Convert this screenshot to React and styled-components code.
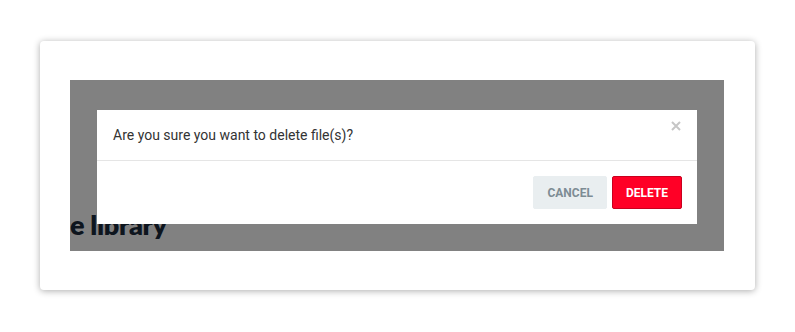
import React from 'react';
import styled, { createGlobalStyle } from 'styled-components';

const GlobalStyle = createGlobalStyle`
  html, body {
    margin: 0;
    padding: 0;
    background: #ffffff;
    font-family: Roboto, 'Liberation Sans', sans-serif;
  }
`;

const Page = styled.div`
  padding: 41px 40px 40px;
`;

const Card = styled.section`
  background: #fff;
  border-radius: 4px;
  box-shadow: 0 1px 7px rgba(0, 0, 0, 0.33);
  padding: 39px 31px 39px 30px;
`;

const Stage = styled.div`
  position: relative;
  height: 171px;
  overflow: hidden;
  background: #fff;
`;

const Title = styled.h1`
  margin: 0;
  padding-top: 125px;
  font-family: Lato, 'Open Sans', sans-serif;
  font-weight: 800;
  font-size: 27px;
  line-height: 40px;
  letter-spacing: -0.3px;
  color: #1a2a3c;
`;

const Overlay = styled.div`
  position: absolute;
  inset: 0;
  background: rgba(0, 0, 0, 0.494);
  display: flex;
  justify-content: center;
  align-items: flex-start;
  padding-top: 30px;
`;

const Modal = styled.div`
  width: 600px;
  background: #fff;
`;

const Header = styled.div`
  position: relative;
  height: 50px;
  padding: 0 16px;
  display: flex;
  align-items: center;
  border-bottom: 1px solid #e5e5e5;
  font-size: 14px;
  color: #333;
`;

const Close = styled.button`
  position: absolute;
  top: 9px;
  right: 14px;
  border: 0;
  background: none;
  padding: 0;
  width: 14px;
  height: 14px;
  display: flex;
  align-items: center;
  justify-content: center;
  cursor: pointer;
`;

const Footer = styled.div`
  display: flex;
  justify-content: flex-end;
  gap: 5px;
  padding: 15px;
`;

const Button = styled.button`
  height: 33px;
  padding: 0 13px;
  border-radius: 2px;
  border: 1px solid ${({ $danger }) => ($danger ? '#c9001e' : '#e9eef0')};
  background: ${({ $danger }) => ($danger ? '#ff0026' : '#e9eef0')};
  color: ${({ $danger }) => ($danger ? '#ffffff' : '#7d8c94')};
  font-family: Roboto, 'Liberation Sans', sans-serif;
  font-weight: 700;
  font-size: 12px;
  text-transform: uppercase;
  cursor: pointer;
`;

export default function App() {
  return (
    <>
      <GlobalStyle />
      <Page>
        <Card>
          <Stage>
            <Title>e library</Title>
            <Overlay>
              <Modal>
                <Header>
                  Are you sure you want to delete file(s)?
                  <Close aria-label="Close">
                    <svg width="10" height="10" viewBox="0 0 10 10">
                      <path d="M1 1 L9 9 M9 1 L1 9" stroke="#c6c6c6" strokeWidth="2" />
                    </svg>
                  </Close>
                </Header>
                <Footer>
                  <Button>Cancel</Button>
                  <Button $danger>Delete</Button>
                </Footer>
              </Modal>
            </Overlay>
          </Stage>
        </Card>
      </Page>
    </>
  );
}
